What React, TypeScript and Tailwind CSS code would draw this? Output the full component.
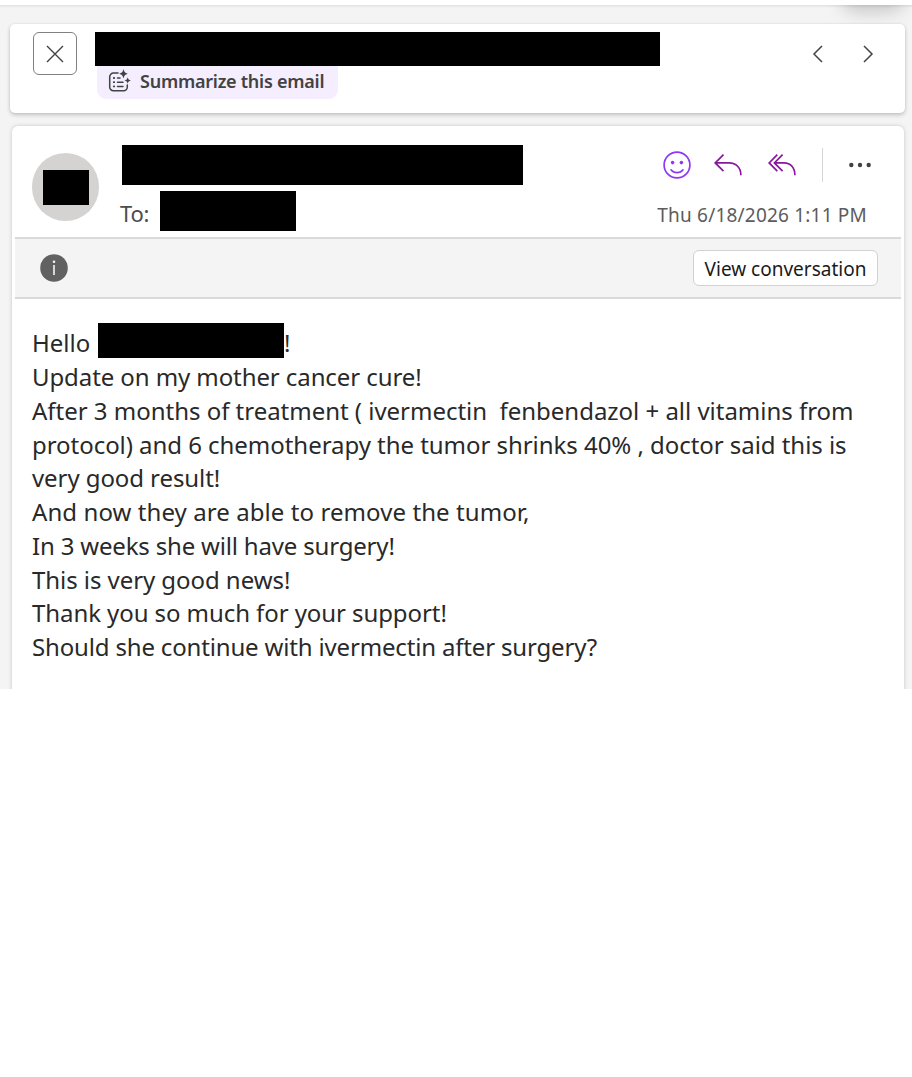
import type { ReactNode } from "react";

const message = [
  { text: "Update on my mother cancer cure!", tracking: "tracking-[-0.09px]" },
  { text: "After 3 months of treatment ( ivermectin  fenbendazol + all vitamins from", tracking: "tracking-[-0.02px]" },
  { text: "protocol) and 6 chemotherapy the tumor shrinks 40% , doctor said this is", tracking: "tracking-[-0.045px]" },
  { text: "very good result!", tracking: "tracking-[-0.08px]" },
  { text: "And now they are able to remove the tumor,", tracking: "tracking-[0.08px]" },
  { text: "In 3 weeks she will have surgery!", tracking: "tracking-[-0.18px]" },
  { text: "This is very good news!", tracking: "tracking-[-0.06px]" },
  { text: "Thank you so much for your support!", tracking: "tracking-[-0.08px]" },
  { text: "Should she continue with ivermectin after surgery?", tracking: "tracking-[-0.165px]" },
];

function IconButton({ label, className, children }: { label: string; className: string; children: ReactNode }) {
  return (
    <button aria-label={label} className={`flex shrink-0 items-center justify-center ${className}`}>
      {children}
    </button>
  );
}

function SummarizeIcon() {
  return (
    <svg className="h-6 w-6 shrink-0" viewBox="0 0 24 24" fill="none" stroke="#424242" strokeWidth="1.5" strokeLinecap="round">
      <path d="M11 4.1H6.400A3.700 3.700 0 0 0 2.700 7.800v10.200a3.700 3.700 0 0 0 3.700 3.700h10.200a3.700 3.700 0 0 0 3.700-3.700v-2" />
      <path d="M10.500 9h2.500M10.500 13.200h5.500M10.500 17.400h5.500" />
      <path d="M6.800 9h.4M6.800 13.200h.4M6.800 17.400h.4" strokeWidth="1.8" />
      <path d="M16.500 0c.8 3.100 1.600 3.900 4.500 4.800-2.900.9-3.700 1.700-4.500 4.800-.8-3.100-1.600-3.900-4.500-4.800 2.900-.9 3.700-1.700 4.500-4.800z" fill="#424242" stroke="none" />
      <path d="M20.700 8.200c.5 2.100 1.100 2.700 3.200 3.300-2.100.6-2.700 1.200-3.200 3.300-.5-2.100-1.100-2.700-3.200-3.300 2.100-.6 2.700-1.200 3.200-3.300z" fill="#424242" stroke="none" />
    </svg>
  );
}

function SubjectBar() {
  return (
    <header className="ml-[10px] mt-[19px] flex h-[89px] w-[895px] rounded-[5px] bg-white pl-[23px] pt-2 shadow-[0_2px_4px_rgba(0,0,0,0.2),0_0_3px_rgba(0,0,0,0.07)]">
      <IconButton label="Close" className="h-[43px] w-11 rounded-md border border-[#808080]">
        <svg className="h-[18px] w-[18px]" viewBox="0 0 18 18" stroke="#424242" strokeWidth="1.4">
          <path d="M1 1l16 16M17 1L1 17" />
        </svg>
      </IconButton>
      <div className="ml-[18px] w-[565px]">
        <div className="h-[34px] bg-black" />
        <button className="ml-[2px] flex h-[33px] w-[241px] items-center rounded-b-[9px] bg-[#f5eeff] pl-[10px] pb-[3px] text-[#424242]">
          <SummarizeIcon />
          <span className="ml-[9px] whitespace-pre text-[18px] font-semibold leading-6 tracking-[-0.25px]">Summarize this email</span>
        </button>
      </div>
      <div className="ml-[146px] flex h-[43px] items-center">
        <IconButton label="Previous" className="w-6">
          <svg className="h-[18px] w-3" viewBox="0 0 12 18" fill="none" stroke="#424242" strokeWidth="1.500">
            <path d="M10 1L2 9l8 8" />
          </svg>
        </IconButton>
        <IconButton label="Next" className="ml-[26px] w-6">
          <svg className="h-[18px] w-3" viewBox="0 0 12 18" fill="none" stroke="#424242" strokeWidth="1.500">
            <path d="M2 1l8 8-8 8" />
          </svg>
        </IconButton>
      </div>
    </header>
  );
}

function Actions() {
  return (
    <div className="flex h-9 items-center">
      <IconButton label="React" className="w-7">
        <svg className="h-7 w-7" viewBox="0 0 28 28" fill="none" stroke="#9038f5" strokeWidth="1.700" strokeLinecap="round">
          <circle cx="14" cy="14" r="12.900" />
          <circle cx="9.600" cy="11.600" r="1.800" fill="#9038f5" stroke="none" />
          <circle cx="18.400" cy="11.600" r="1.800" fill="#9038f5" stroke="none" />
          <path d="M8 18.800c3 3.800 9 3.800 12 0" />
        </svg>
      </IconButton>
      <IconButton label="Reply" className="ml-[23px] w-7">
        <svg className="h-[22px] w-7" viewBox="0 0 28 22" fill="none" stroke="#87189d" strokeWidth="1.700">
          <path d="M9.500 .6L1.200 8.900l8.300 8.200M1.200 8.900H15c7.200 0 11.900 4.800 11.900 12.300" />
        </svg>
      </IconButton>
      <IconButton label="Reply all" className="ml-[26px] w-7">
        <svg className="h-[22px] w-7" viewBox="0 0 28 22" fill="none" stroke="#87189d" strokeWidth="1.700">
          <path d="M9.300 .6L1.200 8.900l8.100 8.200M14.600 .6L6.400 8.900l8.200 8.200M6.400 8.900H16c6.700 0 10.900 4.800 10.900 12.300" />
        </svg>
      </IconButton>
      <div className="ml-[26px] h-[34px] w-px bg-[#d6d6d6]" />
      <IconButton label="More" className="ml-[25px] w-6">
        <svg className="h-1.5 w-6" viewBox="0 0 24 6" fill="#424242">
          <circle cx="3.300" cy="3" r="2.200" />
          <circle cx="12" cy="3" r="2.200" />
          <circle cx="20.700" cy="3" r="2.200" />
        </svg>
      </IconButton>
    </div>
  );
}

export default function App() {
  return (
    <div className="min-h-[1077px] w-[912px] bg-white font-['Noto_Sans','Open_Sans',sans-serif] text-[#292929]">
      <div className="h-[5px]" />
      <div className="relative h-[684px] overflow-hidden bg-[#f4f4f4]">
        <div className="absolute inset-x-0 top-0 h-[3px] bg-linear-to-b from-black/8 to-transparent" />
        {/* shadow falling from the toolbar above */}
        <div className="absolute -top-5 left-[842px] h-[26px] w-[62px] rounded-full bg-black/20 blur-[9px]" />
        <div className="relative flow-root">
          <SubjectBar />
        </div>

        <article className="ml-3 mt-[13px] h-[600px] w-[892px] rounded-t-[6px] bg-white shadow-[0_0_4px_rgba(0,0,0,0.18)]">
          <div className="flex h-[111px] pl-5">
            <div className="mt-[27px] flex h-[68px] w-[67px] shrink-0 items-center justify-center rounded-full bg-[#d4d3d2]">
              <div className="h-[35px] w-[46px] bg-black" />
            </div>
            <div className="ml-[21px] w-[403px] pt-[19px]">
              <div className="ml-[2px] h-10 w-[401px] bg-black" />
              <div className="mt-1.5 flex h-10">
                <span className="w-10 text-[22px] leading-[44px] tracking-[-0.2px] text-[#4d4d4d]">To:</span>
                <div className="w-[136px] bg-black" />
              </div>
            </div>
            <div className="ml-auto mr-[32px] flex flex-col items-end pt-[21px]">
              <Actions />
              <div className="mr-[5px] mt-[18px] whitespace-pre text-[19px] leading-7 tracking-[0.2px] text-[#5c5c5c]">Thu 6/18/2026 1:11 PM</div>
            </div>
          </div>

          <div className="ml-[3px] flex h-[62px] w-[886px] items-center justify-between border-y-2 border-[#dadada] bg-[#f4f4f4] pl-[25px] pr-[23px]">
            <svg className="h-7 w-7" viewBox="0 0 28 28">
              <circle cx="14" cy="14" r="13.800" fill="#616161" />
              <path d="M14 11v10" stroke="#f4f4f4" strokeWidth="1.600" />
              <circle cx="14" cy="7.800" r="1.300" fill="#f4f4f4" />
            </svg>
            <button className="h-9 w-[185px] whitespace-pre rounded-md border border-[#d1d1d1] bg-white pt-[2px] text-[19px] leading-none text-[#1a1a1a]">
              View conversation
            </button>
          </div>

          <div className="whitespace-pre pl-5 pt-[27.250px] text-[24px] leading-[33.750px]">
            <div className="flex h-[33.750px]">
              <span className="w-[66px]">Hello</span>
              <div className="-mt-[3px] h-[35px] w-[186px] bg-black" />
              <span>!</span>
            </div>
            {message.map((line) => (
              <p key={line.text}>
                <span className={line.tracking}>{line.text}</span>
              </p>
            ))}
          </div>
        </article>
      </div>
    </div>
  );
}
